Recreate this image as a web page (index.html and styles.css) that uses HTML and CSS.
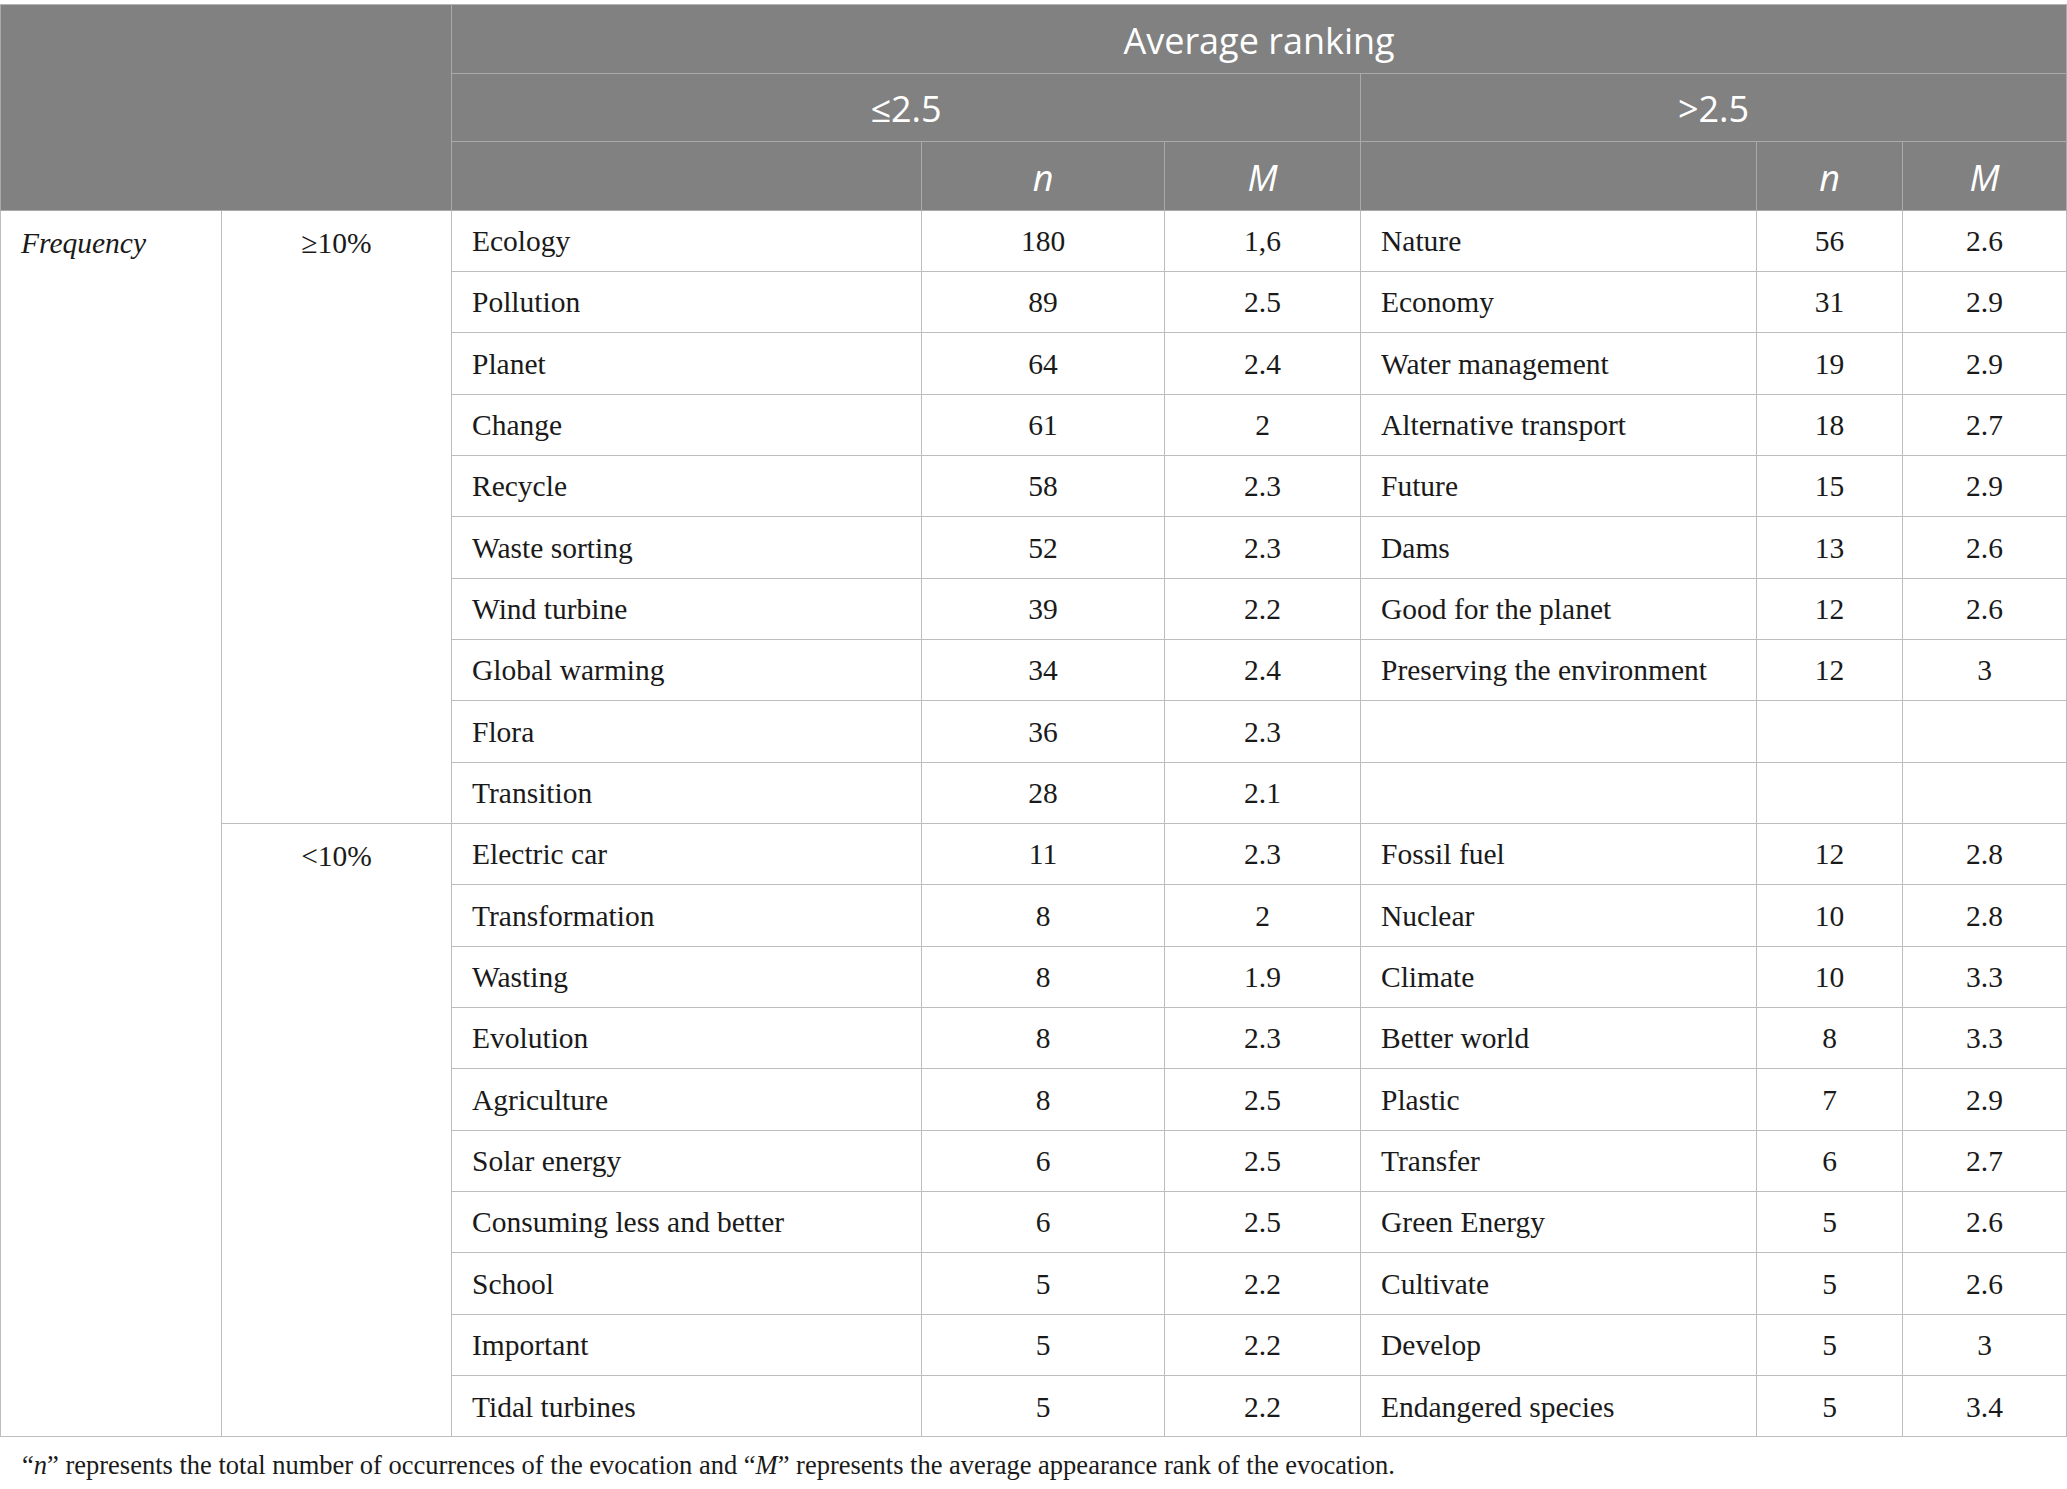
FILE: index.html
```html
<!DOCTYPE html>
<html lang="en">
<head>
  <meta charset="UTF-8">
  <meta name="viewport" content="width=device-width, initial-scale=1.0">
  <title>Average ranking</title>
  <link rel="stylesheet" href="styles.css">
</head>
<body>

  <div class="page">
    <table class="rank-table">
      <colgroup>
        <col class="c-freq">
        <col class="c-band">
        <col class="c-word">
        <col class="c-n">
        <col class="c-m">
        <col class="c-word2">
        <col class="c-n2">
        <col class="c-m2">
      </colgroup>
      <thead>
        <tr class="h1">
          <th colspan="2" rowspan="3"></th>
          <th colspan="6">Average ranking</th>
        </tr>
        <tr class="h2">
          <th colspan="3">≤2.5</th>
          <th colspan="3">&gt;2.5</th>
        </tr>
        <tr class="h3">
          <th></th>
          <th><i>n</i></th>
          <th><i>M</i></th>
          <th></th>
          <th><i>n</i></th>
          <th><i>M</i></th>
        </tr>
      </thead>
      <tbody>
        <tr>
          <td rowspan="20" class="freq"><i>Frequency</i></td>
          <td rowspan="10" class="band">≥10%</td>
          <td class="word">Ecology</td><td>180</td><td>1,6</td>
          <td class="word">Nature</td><td>56</td><td>2.6</td>
        </tr>
        <tr>
          <td class="word">Pollution</td><td>89</td><td>2.5</td>
          <td class="word">Economy</td><td>31</td><td>2.9</td>
        </tr>
        <tr>
          <td class="word">Planet</td><td>64</td><td>2.4</td>
          <td class="word">Water management</td><td>19</td><td>2.9</td>
        </tr>
        <tr>
          <td class="word">Change</td><td>61</td><td>2</td>
          <td class="word">Alternative transport</td><td>18</td><td>2.7</td>
        </tr>
        <tr>
          <td class="word">Recycle</td><td>58</td><td>2.3</td>
          <td class="word">Future</td><td>15</td><td>2.9</td>
        </tr>
        <tr>
          <td class="word">Waste sorting</td><td>52</td><td>2.3</td>
          <td class="word">Dams</td><td>13</td><td>2.6</td>
        </tr>
        <tr>
          <td class="word">Wind turbine</td><td>39</td><td>2.2</td>
          <td class="word">Good for the planet</td><td>12</td><td>2.6</td>
        </tr>
        <tr>
          <td class="word">Global warming</td><td>34</td><td>2.4</td>
          <td class="word">Preserving the environment</td><td>12</td><td>3</td>
        </tr>
        <tr>
          <td class="word">Flora</td><td>36</td><td>2.3</td>
          <td class="word"></td><td></td><td></td>
        </tr>
        <tr>
          <td class="word">Transition</td><td>28</td><td>2.1</td>
          <td class="word"></td><td></td><td></td>
        </tr>
        <tr>
          <td rowspan="10" class="band">&lt;10%</td>
          <td class="word">Electric car</td><td>11</td><td>2.3</td>
          <td class="word">Fossil fuel</td><td>12</td><td>2.8</td>
        </tr>
        <tr>
          <td class="word">Transformation</td><td>8</td><td>2</td>
          <td class="word">Nuclear</td><td>10</td><td>2.8</td>
        </tr>
        <tr>
          <td class="word">Wasting</td><td>8</td><td>1.9</td>
          <td class="word">Climate</td><td>10</td><td>3.3</td>
        </tr>
        <tr>
          <td class="word">Evolution</td><td>8</td><td>2.3</td>
          <td class="word">Better world</td><td>8</td><td>3.3</td>
        </tr>
        <tr>
          <td class="word">Agriculture</td><td>8</td><td>2.5</td>
          <td class="word">Plastic</td><td>7</td><td>2.9</td>
        </tr>
        <tr>
          <td class="word">Solar energy</td><td>6</td><td>2.5</td>
          <td class="word">Transfer</td><td>6</td><td>2.7</td>
        </tr>
        <tr>
          <td class="word">Consuming less and better</td><td>6</td><td>2.5</td>
          <td class="word">Green Energy</td><td>5</td><td>2.6</td>
        </tr>
        <tr>
          <td class="word">School</td><td>5</td><td>2.2</td>
          <td class="word">Cultivate</td><td>5</td><td>2.6</td>
        </tr>
        <tr>
          <td class="word">Important</td><td>5</td><td>2.2</td>
          <td class="word">Develop</td><td>5</td><td>3</td>
        </tr>
        <tr>
          <td class="word">Tidal turbines</td><td>5</td><td>2.2</td>
          <td class="word">Endangered species</td><td>5</td><td>3.4</td>
        </tr>
      </tbody>
    </table>

    <p class="note">“<i>n</i>” represents the total number of occurrences of the evocation and “<i>M</i>” represents the average appearance rank of the evocation.</p>
  </div>

</body>
</html>
```

FILE: styles.css
```css
/* Page */
body {
  margin: 0;
  background-color: #fff;
  color: #1a1a1a;
  font-family: 'Liberation Serif', 'Times New Roman', serif;
}

.page {
  padding-top: 4px;
}

/* Table */
.rank-table {
  width: 2066px;
  border-collapse: collapse;
  table-layout: fixed;
}

.c-freq { width: 221px; }
.c-band { width: 230px; }
.c-word { width: 470px; }
.c-n { width: 243px; }
.c-m { width: 196px; }
.c-word2 { width: 396px; }
.c-n2 { width: 146px; }
.c-m2 { width: 164px; }

/* Header */
.rank-table th {
  background-color: #808180;
  color: #fff;
  font-family: 'Open Sans', 'Noto Sans', sans-serif;
  font-weight: 400;
  font-size: 36px;
  text-align: center;
  border: 1px solid #a9aaa9;
  padding: 3px 0 0;
}

.rank-table thead tr {
  height: 68.5px;
}

.rank-table thead tr.h1 th {
  border-top-color: #b5b5b5;
}

/* Body */
.rank-table td {
  border: 1px solid #bdbdbd;
  font-size: 29.5px;
  text-align: center;
  vertical-align: middle;
  padding: 2px 20px 0;
  line-height: 1.2;
}

.rank-table tbody tr {
  height: 61.35px;
}

.rank-table td.word {
  text-align: left;
}

.rank-table td.freq {
  text-align: left;
  vertical-align: top;
  line-height: 61px;
}

.rank-table td.band {
  vertical-align: top;
  line-height: 61px;
}

/* Footnote */
.note {
  margin: 12px 0 0 22px;
  font-size: 26.5px;
  line-height: 32px;
}
```
